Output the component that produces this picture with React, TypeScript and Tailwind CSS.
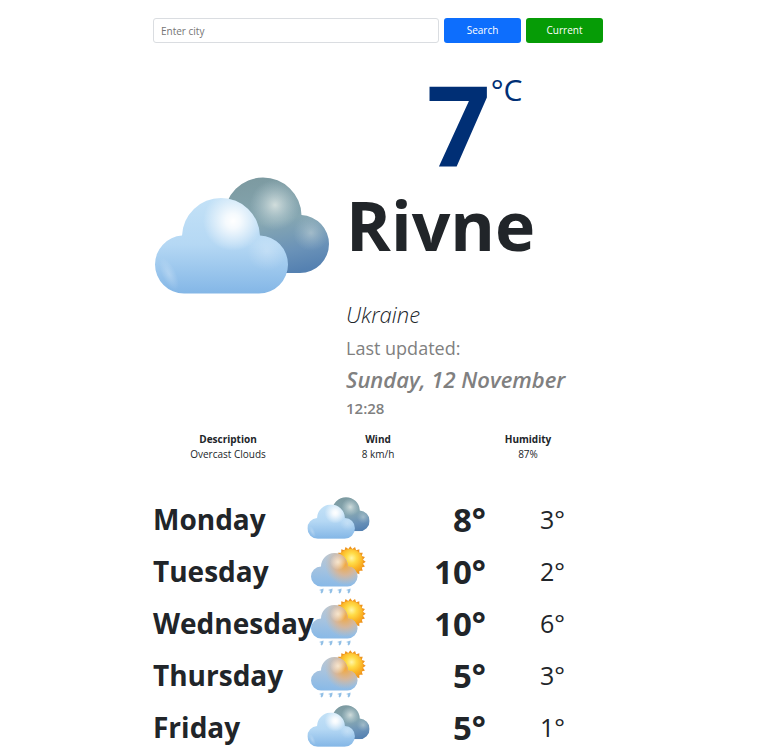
import { useId } from "react";

const forecast = [
  { day: "Monday", icon: "clouds", high: 8, low: 3 },
  { day: "Tuesday", icon: "rain", high: 10, low: 2 },
  { day: "Wednesday", icon: "rain", high: 10, low: 6 },
  { day: "Thursday", icon: "rain", high: 5, low: 3 },
  { day: "Friday", icon: "clouds", high: 5, low: 1 },
];

const details = [
  { label: "Description", value: "Overcast Clouds" },
  { label: "Wind", value: "8 km/h" },
  { label: "Humidity", value: "87%" },
];

function CloudsIcon({ className }: { className: string }) {
  const id = useId();
  return (
    <svg viewBox="0 0 176 117" className={className} role="img" aria-label="Overcast clouds">
      <defs>
        <linearGradient id={id + "back"} x1="0.4" y1="0" x2="0.65" y2="0.85">
          <stop offset="0" stopColor="#7b989e" />
          <stop offset="0.5" stopColor="#86a7b2" />
          <stop offset="0.8" stopColor="#6a92b8" />
          <stop offset="1" stopColor="#5581b1" />
        </linearGradient>
        <linearGradient id={id + "front"} x1="0" y1="0.15" x2="0" y2="1">
          <stop offset="0" stopColor="#c4e2f7" />
          <stop offset="0.5" stopColor="#b5d8f4" />
          <stop offset="1" stopColor="#83b6e6" />
        </linearGradient>
        <radialGradient id={id + "glow"}>
          <stop offset="0" stopColor="#fff" />
          <stop offset="0.25" stopColor="#fff" stopOpacity="0.85" />
          <stop offset="1" stopColor="#fff" stopOpacity="0" />
        </radialGradient>
        <radialGradient id={id + "soft"}>
          <stop offset="0" stopColor="#fff" stopOpacity="0.25" />
          <stop offset="1" stopColor="#fff" stopOpacity="0" />
        </radialGradient>
        <radialGradient id={id + "dim"}>
          <stop offset="0" stopColor="#e5ece8" stopOpacity="0.8" />
          <stop offset="1" stopColor="#c0d4da" stopOpacity="0" />
        </radialGradient>
        <clipPath id={id + "backShape"}>
          <circle cx="109" cy="39" r="38.500" />
          <circle cx="146" cy="67" r="29" />
          <rect x="80" y="50" width="66" height="46" />
        </clipPath>
        <clipPath id={id + "frontShape"}>
          <circle cx="67" cy="60" r="39" />
          <circle cx="30" cy="87.500" r="29" />
          <circle cx="105" cy="87.500" r="29" />
          <rect x="30" y="70" width="75" height="46.500" />
        </clipPath>
      </defs>
      <g clipPath={"url(#" + id + "backShape)"}>
        <rect width="176" height="117" fill={"url(#" + id + "back)"} />
        <circle cx="121" cy="28" r="25" fill={"url(#" + id + "dim)"} />
        <circle cx="157" cy="56" r="18" fill={"url(#" + id + "dim)"} opacity="0.5" />
      </g>
      <g clipPath={"url(#" + id + "frontShape)"}>
        <rect width="176" height="117" fill={"url(#" + id + "front)"} />
        <circle cx="79" cy="44" r="30" fill={"url(#" + id + "glow)"} />
        <circle cx="113" cy="74" r="20" fill={"url(#" + id + "soft)"} />
        <ellipse cx="15" cy="97" rx="7" ry="18" transform="rotate(-25 15 97)" fill={"url(#" + id + "soft)"} />
      </g>
    </svg>
  );
}

function RainIcon({ className }: { className: string }) {
  const id = useId();
  const rays = Array.from({ length: 40 }, (_, i) => {
    const radius = i % 2 === 0 ? 15.4 : 12.8;
    const angle = (i * Math.PI) / 20;
    return `${(40.3 + radius * Math.cos(angle)).toFixed(2)},${(15.7 + radius * Math.sin(angle)).toFixed(2)}`;
  }).join(" ");
  return (
    <svg viewBox="0 0 56 48" className={className} role="img" aria-label="Sun and rain">
      <defs>
        <radialGradient id={id + "sun"} cx="0.55" cy="0.36" r="0.65">
          <stop offset="0" stopColor="#fff6a8" />
          <stop offset="0.3" stopColor="#ffdc48" />
          <stop offset="0.65" stopColor="#fbb424" />
          <stop offset="1" stopColor="#f0921c" />
        </radialGradient>
        <linearGradient id={id + "cloud"} x1="0.5" y1="0.1" x2="0.4" y2="0.9">
          <stop offset="0" stopColor="#c4c8cc" />
          <stop offset="0.5" stopColor="#a5c3e0" />
          <stop offset="1" stopColor="#85b8e8" />
        </linearGradient>
        <radialGradient id={id + "warm"}>
          <stop offset="0" stopColor="#f2a93f" />
          <stop offset="0.5" stopColor="#dcb592" stopOpacity="0.9" />
          <stop offset="1" stopColor="#cdb9a8" stopOpacity="0" />
        </radialGradient>
        <radialGradient id={id + "glow"}>
          <stop offset="0" stopColor="#fff6e4" stopOpacity="0.75" />
          <stop offset="1" stopColor="#fff" stopOpacity="0" />
        </radialGradient>
        <clipPath id={id + "shape"}>
          <circle cx="24.500" cy="20.500" r="13.500" />
          <circle cx="11" cy="30.500" r="10" />
          <circle cx="37.500" cy="30.500" r="10" />
          <rect x="11" y="24" width="26.500" height="16.500" />
        </clipPath>
      </defs>
      <polygon points={rays} fill="#ee951f" />
      <circle cx="40.300" cy="15.700" r="12.800" fill={"url(#" + id + "sun)"} />
      <g clipPath={"url(#" + id + "shape)"}>
        <rect width="56" height="48" fill={"url(#" + id + "cloud)"} />
        <circle cx="35" cy="19" r="20" fill={"url(#" + id + "warm)"} />
      </g>
      <circle cx="28" cy="16" r="8" fill={"url(#" + id + "glow)"} />
      {[11, 20, 29, 38].map((x) => (
        <path key={x} d={`M${x + 2.5} 42.500l-4.500 1.500l2 .8q-1 2 .4 2.700q2.200-.8 2.100-5Z`} fill="#93c0e6" />
      ))}
    </svg>
  );
}

export default function App() {
  return (
    <div className="pr-[25px] font-['Open_Sans','Noto_Sans',sans-serif] text-[#212529]">
      <main className="mx-auto max-w-[450px] pt-[18px]">
        <form className="flex gap-[5px] text-[10px]" onSubmit={(event) => event.preventDefault()}>
          <input
            type="text"
            aria-label="City"
            placeholder="Enter city"
            className="h-[25px] min-w-0 flex-1 rounded-[3px] border border-[#dadde1] px-[7px] placeholder:text-[#757575]"
          />
          <button type="submit" className="h-[25px] w-[77px] rounded-[3px] bg-[#0d6efd] text-white">
            Search
          </button>
          <button type="button" className="h-[25px] w-[77px] rounded-[3px] bg-[#069c06] text-white">
            Current
          </button>
        </form>

        <section className="mt-6 flex items-center gap-4">
          <CloudsIcon className="mb-4 ml-px w-[176px] shrink-0" />
          <div className="min-w-0 flex-1">
            <div className="flex justify-center text-[#002f75]">
              <span className="text-[112px] leading-[112px] font-bold">7</span>
              <span className="text-[30px] leading-[46px] font-medium">°C</span>
            </div>
            <h1 className="text-[68px] leading-[92px] font-bold">Rivne</h1>
            <p className="mt-7 text-[22px] leading-[30px] font-light italic">Ukraine</p>
            <div className="mt-1 text-[#808080]">
              <p className="text-[18px] leading-[30px]">Last updated:</p>
              <p className="text-[22px] leading-[33px] font-semibold whitespace-nowrap italic">Sunday, 12 November</p>
              <p className="text-[15px] leading-[24px] font-semibold">12:28</p>
            </div>
          </div>
        </section>

        <dl className="mt-3 grid grid-cols-3 text-center text-[10px] leading-[15px]">
          {details.map((item) => (
            <div key={item.label}>
              <dt className="font-bold">{item.label}</dt>
              <dd>{item.value}</dd>
            </div>
          ))}
        </dl>

        <ul className="mt-8">
          {forecast.map((item) => (
            <li
              key={item.day}
              className="grid h-[52px] grid-cols-[minmax(0,150fr)_minmax(0,70fr)_minmax(0,113fr)_minmax(0,117fr)] items-center"
            >
              <span className="pb-0.5 text-[28px] font-bold">{item.day}</span>
              <span className="flex justify-center pb-1">
                {item.icon === "clouds" ? (
                  <CloudsIcon className="w-[63px]" />
                ) : (
                  <RainIcon className="w-[56px]" />
                )}
              </span>
              <span className="text-right text-[33px] font-bold">{item.high}°</span>
              <span className="pl-[54px] text-[25px]">{item.low}°</span>
            </li>
          ))}
        </ul>
      </main>
    </div>
  );
}
